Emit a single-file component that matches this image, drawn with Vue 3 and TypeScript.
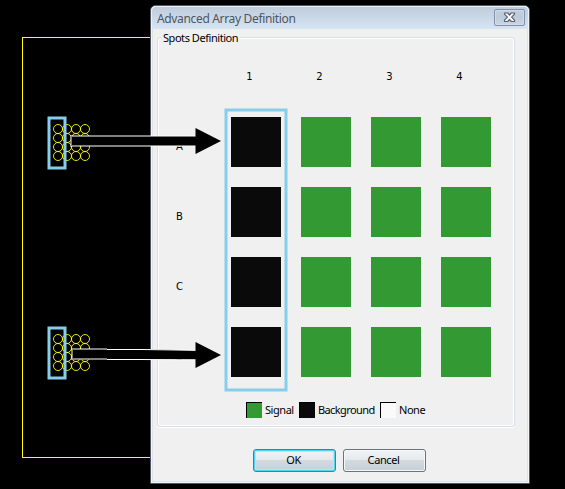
<script setup lang="ts">
interface Legend { kind: string; label: string }

const columns: number[] = [1, 2, 3, 4]
const rows: string[] = ['A', 'B', 'C', 'D']
const legend: Legend[] = [
  { kind: 'signal', label: 'Signal' },
  { kind: 'background', label: 'Background' },
  { kind: 'none', label: 'None' },
]
const blocks: number[] = [129, 339]
const steps: number[] = [0, 9, 18, 27]
const kindOf = (column: number): string => (column === 1 ? 'background' : 'signal')
</script>

<template>
  <main class="screen">
    <svg class="field" width="565" height="489" viewBox="0 0 565 489">
      <rect x="22.5" y="37.5" width="200" height="420" fill="none" stroke="#ffff00" />
      <g v-for="top in blocks" :key="top" fill="none" stroke="#ffff00" stroke-width="0.9">
        <template v-for="dy in steps" :key="dy">
          <circle v-for="dx in steps" :key="dx" :cx="58 + dx" :cy="top + dy" r="4.5" />
        </template>
      </g>
    </svg>

    <section class="dialog">
      <header class="titlebar">
        <span class="title">Advanced Array Definition</span>
        <button class="close" aria-label="Close">
          <svg width="13" height="11" viewBox="0 0 13 11">
            <path d="M1.500 1h3.200l1.800 2 1.800-2h3.200v1.200L8.600 5.200l2.900 3v1.300H8.300l-1.800-2-1.800 2H1.500V8.200l2.900-3-2.900-3z" fill="#fafafa" stroke="#596273" stroke-width="1.2" stroke-linejoin="round" />
          </svg>
        </button>
      </header>

      <div class="group">
        <span class="group-title"><span class="caption">Spots Definition</span></span>
        <div class="grid">
          <span class="corner"></span>
          <span v-for="c in columns" :key="c" class="col-label">{{ c }}</span>
          <template v-for="r in rows" :key="r">
            <span class="row-label">{{ r }}</span>
            <span v-for="c in columns" :key="c" class="spot" :class="kindOf(c)"></span>
          </template>
        </div>
        <div class="legend">
          <span v-for="item in legend" :key="item.kind" class="entry" :class="'entry-' + item.kind">
            <i class="swatch" :class="item.kind"></i><span class="name">{{ item.label }}</span>
          </span>
        </div>
      </div>

      <footer class="actions">
        <button class="btn primary">OK</button>
        <button class="btn">Cancel</button>
      </footer>
    </section>

    <svg class="marks" width="565" height="489" viewBox="0 0 565 489">
      <g fill="none" stroke="#87ceeb" stroke-width="3">
        <rect x="49" y="118" width="16" height="50" />
        <rect x="49" y="328" width="16" height="50" />
        <rect x="226" y="110" width="60" height="280" />
      </g>
      <rect x="71" y="136" width="125" height="10" fill="#000" />
      <path d="M196 136H71V146H196" fill="none" stroke="#fff" stroke-opacity="0.5" stroke-width="2" />
      <path d="M195.500 128L221 141L195.500 154z" fill="#000" />
      <path d="M72 349H142L196 350.500V359.500H72z" fill="#000" />
      <path d="M107 349H72V359H107" fill="none" stroke="#fff" stroke-opacity="0.5" stroke-width="2" />
      <path d="M107 349.500H142L196 350.300M107 359.500H142L196 359.900" fill="none" stroke="#fff" />
      <path d="M195.500 342L221 355L195.500 368z" fill="#000" />
    </svg>
  </main>
</template>

<style>
body {
  margin: 0;
  background: #000;
}
</style>

<style scoped>
.screen {
  position: relative;
  box-sizing: border-box;
  width: 565px;
  height: 489px;
  padding: 5px 0 0 150px;
  overflow: hidden;
  background: #000;
  font-family: "Noto Sans", "Open Sans", sans-serif;
  font-size: 11px;
  color: #000;
}
.field,
.marks {
  position: absolute;
  top: 0;
  left: 0;
  pointer-events: none;
}
.dialog {
  position: relative;
  box-sizing: border-box;
  width: 380px;
  height: 479px;
  border: 1px solid #53565a;
  border-radius: 6px 6px 0 0;
  background: #f0f0f0;
  box-shadow: inset 0 0 0 1px #f4f7fa, inset 0 0 0 2px #dae4ef;
}
.titlebar {
  box-sizing: border-box;
  display: flex;
  justify-content: space-between;
  height: 23px;
  padding: 3px 4px 0 6px;
  border-radius: 5px 5px 0 0;
  background: linear-gradient(#bdcbdb, #d7e4f2);
  box-shadow: inset 0 1px 0 #edf2f7, inset 1px 0 0 #eef3f8, inset -1px 0 0 #eef3f8;
}
.title {
  font-size: 12px;
  line-height: 19px;
  letter-spacing: -0.34px;
  white-space: nowrap;
  color: #4d5661;
}
.close {
  box-sizing: border-box;
  display: flex;
  align-items: center;
  justify-content: center;
  width: 31px;
  height: 17px;
  padding: 0;
  border: 1px solid #8491a8;
  border-radius: 2px;
  background: linear-gradient(#c2cfdf, #bccada 50%, #c9d7e6);
  box-shadow: inset 0 0 0 1px #d2dce8;
}
.group {
  box-sizing: border-box;
  width: 358px;
  height: 390px;
  margin: 8px 0 0 6px;
  border: 1px solid #d5dfe8;
  border-radius: 3px;
  box-shadow: inset 0 0 0 1px #fff, 0 1px 0 #fff;
}
.group-title {
  display: block;
  width: 77px;
  height: 14px;
  margin: -7px 0 0 3px;
  padding-left: 2px;
  background: #f0f0f0;
  line-height: 14px;
  white-space: nowrap;
}
.caption {
  letter-spacing: -0.45px;
}
.grid {
  display: grid;
  grid-template-columns: 33px repeat(4, 50px);
  grid-template-rows: 20px repeat(4, 50px);
  gap: 20px;
  margin: 32px 0 0 18px;
  padding-left: 2px;
  font-family: "DejaVu Sans", sans-serif;
  font-size: 10px;
}
.col-label {
  margin-top: -6px;
  padding-right: 13px;
  line-height: 12px;
  text-align: center;
}
.row-label {
  margin-left: -2px;
  padding-top: 10px;
  align-self: center;
  line-height: 12px;
}
.signal {
  background: #339933;
}
.background {
  background: #0a0a0a;
}
.none {
  background: #fafafa;
}
.legend {
  display: flex;
  margin: 25px 0 0 88px;
}
.entry {
  display: flex;
  gap: 3px;
  line-height: 16px;
}
.entry-signal {
  width: 53px;
}
.entry-background {
  width: 81px;
}
.entry-background .name {
  letter-spacing: -0.6px;
}
.swatch {
  box-sizing: border-box;
  flex: none;
  width: 16px;
  height: 16px;
  border-top: 1px solid #000;
  border-left: 1px solid #000;
}
.name {
  letter-spacing: -0.45px;
}
.actions {
  display: flex;
  gap: 7px;
  margin: 22px 0 0 102px;
}
.btn {
  box-sizing: border-box;
  width: 83px;
  height: 23px;
  padding: 0 2px 1px 0;
  border: 1px solid #6a747c;
  border-radius: 3px;
  background: linear-gradient(#f1f4f6, #e5e9ec 48%, #d3dadf 50%, #c5d0d7);
  box-shadow: inset 0 0 0 1px #f5f8fa;
  font: inherit;
  line-height: 20px;
  letter-spacing: -0.4px;
  color: #000;
}
.primary {
  border-color: #3c7fb1;
  box-shadow: inset 0 0 0 1px #4fd6f7, inset 0 0 0 2px #b9e5f2;
}
</style>
